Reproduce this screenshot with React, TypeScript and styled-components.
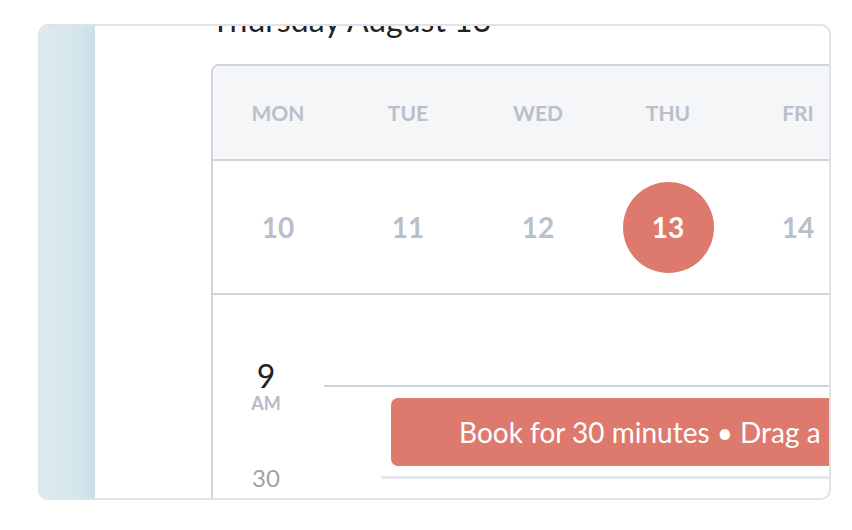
import styled, { createGlobalStyle } from 'styled-components';

const GlobalStyle = createGlobalStyle`
  body {
    margin: 0;
    background: #ffffff;
    font-family: 'Lato', 'Open Sans', sans-serif;
  }
`;

const Page = styled.div`
  padding: 24px 21px 0 38px;
`;

const Card = styled.div`
  width: 793px;
  height: 476px;
  box-sizing: border-box;
  border: 2px solid #dfe2e7;
  border-radius: 10px;
  overflow: hidden;
  display: flex;
`;

const Strip = styled.div`
  width: 55px;
  flex-shrink: 0;
  background: linear-gradient(to right, #dbeaf0, #d5e7ed 70%, #c9dfe6);
`;

const Main = styled.div`
  flex: 1;
  min-width: 0;
  overflow: hidden;
  padding-left: 116px;
`;

const Scroller = styled.div`
  margin-top: -24px;
`;

const Heading = styled.h2`
  margin: 0 0 26px;
  font-size: 32px;
  line-height: 36px;
  font-weight: 400;
  color: #1f2328;
  white-space: nowrap;
`;

const Calendar = styled.div`
  width: 660px;
  border: 2px solid #cfd5de;
  border-right: none;
  border-bottom: none;
  border-radius: 8px 0 0 0;
  overflow: hidden;
`;

const WeekRow = styled.div<{ $tall: number; $bg?: string }>`
  display: grid;
  grid-template-columns: repeat(5, 130px);
  height: ${(p) => p.$tall}px;
  align-items: center;
  justify-items: center;
  background: ${(p) => p.$bg || '#ffffff'};
  border-bottom: 2px solid #cfd5de;
`;

const DayName = styled.span`
  font-size: 21px;
  font-weight: 700;
  color: #b9c0c8;
`;

const DateCell = styled.span<{ $today?: boolean }>`
  width: 91px;
  height: 91px;
  border-radius: 50%;
  display: flex;
  align-items: center;
  justify-content: center;
  font-size: 28px;
  font-weight: 700;
  color: ${(p) => (p.$today ? '#ffffff' : '#b8c0c9')};
  background: ${(p) => (p.$today ? '#de7a6d' : 'transparent')};
`;

const TimeGrid = styled.div`
  display: grid;
  grid-template-columns: 111px 1fr;
  padding-top: 65px;
  height: 260px;
  align-content: start;
`;

const HourLabel = styled.div`
  display: flex;
  flex-direction: column;
  align-items: center;
  padding-right: 5px;
`;

const HourNumber = styled.span`
  font-size: 32px;
  line-height: 32px;
  color: #1e2227;
`;

const Meridiem = styled.span`
  margin-top: 2px;
  font-size: 18px;
  line-height: 18px;
  font-weight: 700;
  color: #b5bcc4;
`;

const Slot = styled.div`
  display: flex;
  flex-direction: column;
`;

const SlotLine = styled.div<{ $indent: number; $color: string; $thick: number; $top: number }>`
  margin: ${(p) => p.$top}px 0 0 ${(p) => p.$indent}px;
  height: ${(p) => p.$thick}px;
  width: 700px;
  background: ${(p) => p.$color};
`;

const Booking = styled.div`
  margin: 11px 0 0 67px;
  width: 620px;
  height: 68px;
  border-radius: 7px;
  background: #de7a6d;
  color: #ffffff;
  font-size: 28px;
  line-height: 68px;
  padding-left: 68px;
  box-sizing: border-box;
  white-space: nowrap;
`;

const HalfLabel = styled.span`
  text-align: center;
  padding-right: 5px;
  font-size: 24px;
  line-height: 24px;
  color: #9ba3ad;
`;

const days = ['MON', 'TUE', 'WED', 'THU', 'FRI'];
const dates = [10, 11, 12, 13, 14];

export default function App() {
  return (
    <>
      <GlobalStyle />
      <Page>
        <Card>
          <Strip />
          <Main>
            <Scroller>
              <Heading>Thursday August 13</Heading>
              <Calendar>
                <WeekRow $tall={93} $bg="#f4f6f8">
                  {days.map((d) => (
                    <DayName key={d}>{d}</DayName>
                  ))}
                </WeekRow>
                <WeekRow $tall={132}>
                  {dates.map((d) => (
                    <DateCell key={d} $today={d === 13}>
                      {d}
                    </DateCell>
                  ))}
                </WeekRow>
                <TimeGrid>
                  <HourLabel>
                    <HourNumber>9</HourNumber>
                    <Meridiem>AM</Meridiem>
                  </HourLabel>
                  <Slot>
                    <SlotLine $indent={0} $color="#cdd3dc" $thick={2} $top={25} />
                    <Booking>Book for 30 minutes • Drag a slot</Booking>
                  </Slot>
                  <HalfLabel>30</HalfLabel>
                  <SlotLine $indent={57} $color="#e4e7ed" $thick={3} $top={10} />
                </TimeGrid>
              </Calendar>
            </Scroller>
          </Main>
        </Card>
      </Page>
    </>
  );
}
